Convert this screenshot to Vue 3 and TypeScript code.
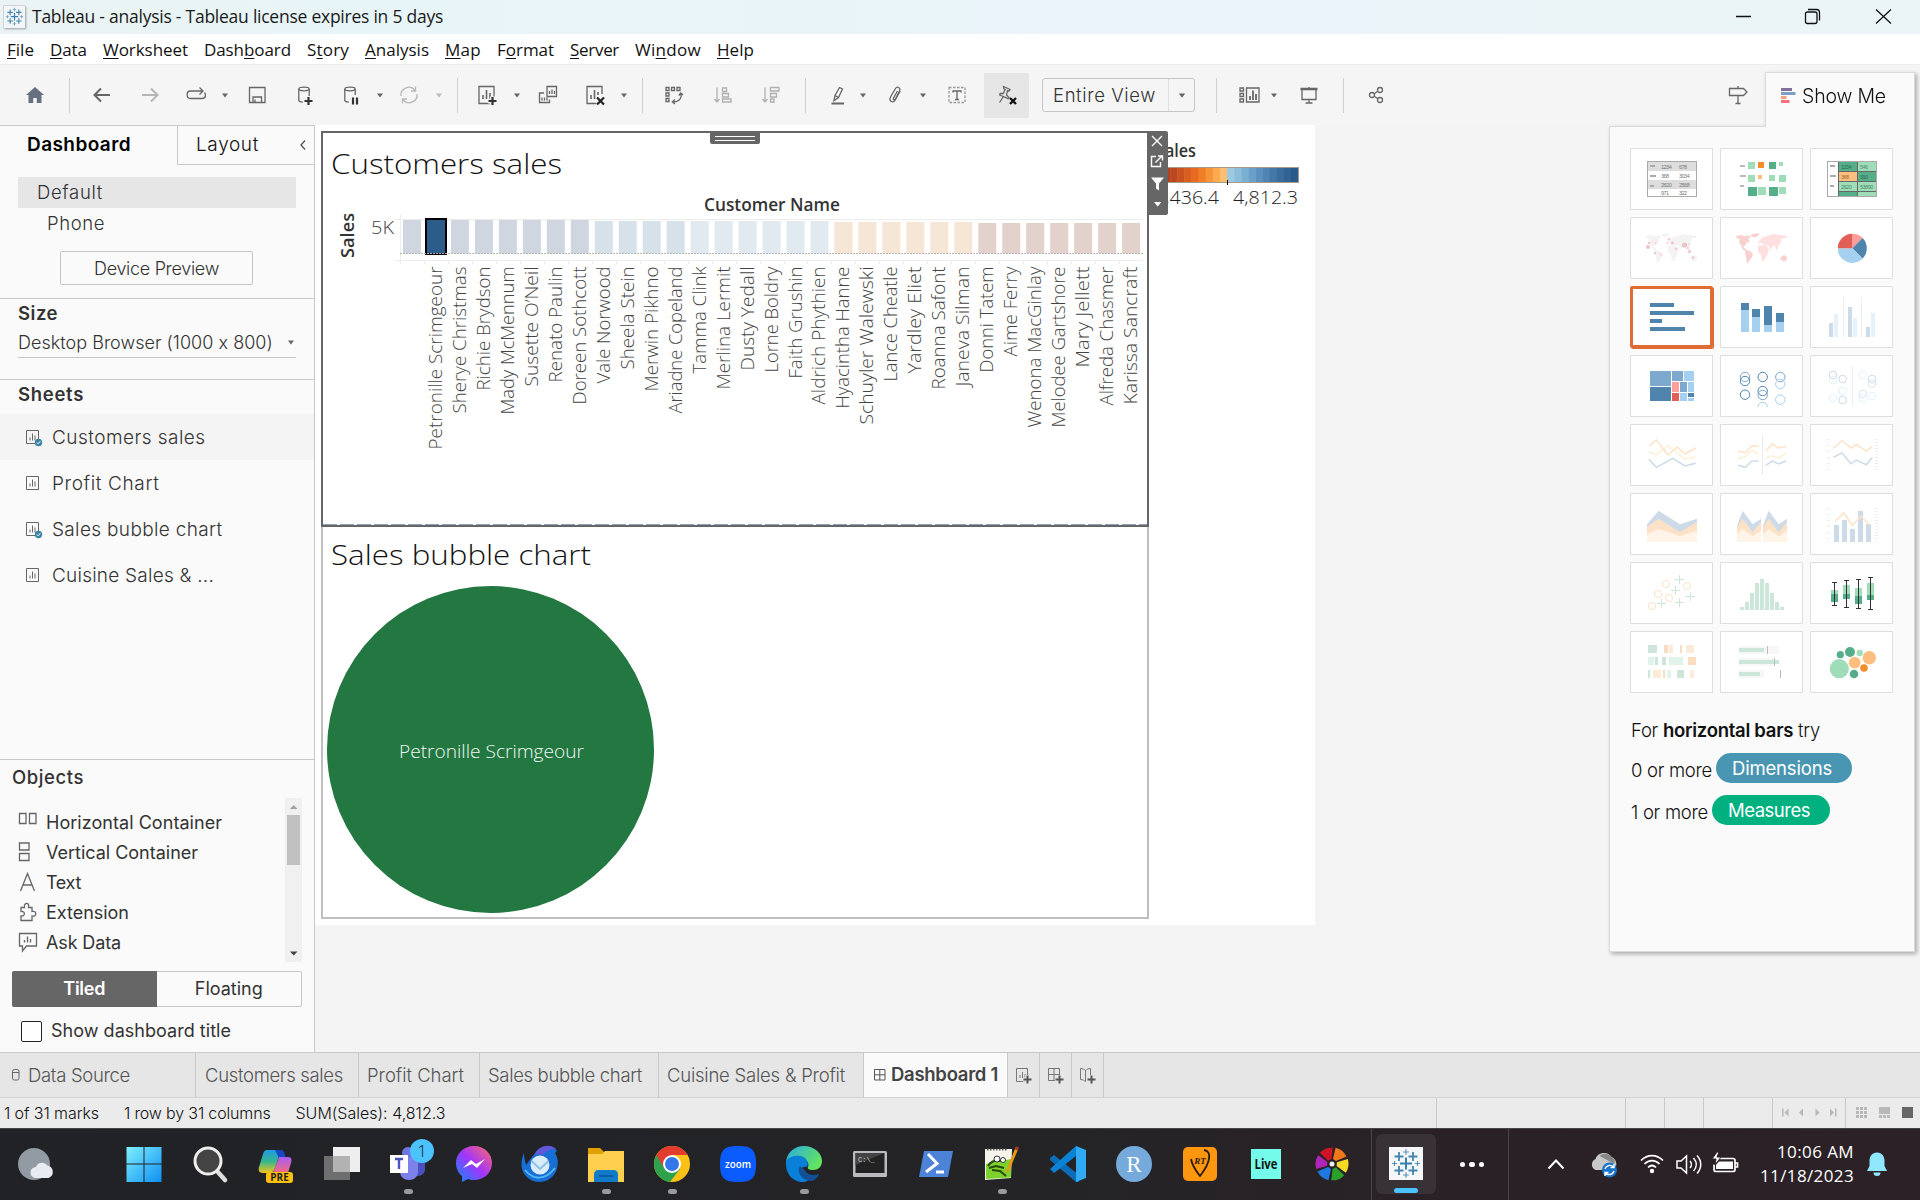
<script setup lang="ts">
import type { ObjectDirective } from 'vue'

// Tracks a label out so that it fills the given width in pixels.
const vFit: ObjectDirective<HTMLElement, number> = {
  mounted(el, { value }) {
    const count = (el.textContent ?? '').length
    if (count) el.style.letterSpacing = `${(value - el.getBoundingClientRect().width) / count}px`
  },
}

const menus = [
  ['', 'F', 'ile', 27], ['', 'D', 'ata', 37], ['', 'W', 'orksheet', 85], ['Dash', 'b', 'oard', 87],
  ['S', 't', 'ory', 42], ['', 'A', 'nalysis', 64], ['', 'M', 'ap', 36], ['F', 'o', 'rmat', 57],
  ['', 'S', 'erver', 49], ['Wi', 'n', 'dow', 66], ['', 'H', 'elp', 37],
] as const

const sheetGlyph = '<path d="M5 5.500h15v17h-15z"/><path d="M9 18v-4M12.500 18V9M16 18v-6" stroke-width="1.600"/>'
const plusGlyph = '<path d="M14 20h9M18.500 15.500v9" stroke="#f5f5f5" stroke-width="5"/><path d="M14.500 20h8M18.500 16v8" stroke="#333" stroke-width="2.200"/>'
const crossGlyph = '<path d="M15 16.500l7 7M22 16.500l-7 7" stroke="#222" stroke-width="2.200"/>'

const icons: Record<string, string> = {
  home: '<path d="M14 6L5 14h2.500v8h4.700v-5h3.600v5h4.700V14H23z" fill="#66707e" stroke="none"/>',
  back: '<path d="M22 14H7M13 7.500L6.500 14l6.500 6.500" stroke-width="2"/>',
  forward: '<path d="M6 14h15M15 7.500l6.500 6.500-6.500 6.500" stroke="#b5b5b5" stroke-width="2"/>',
  redo: '<path d="M8.500 17.500c-4.500 0-4.500-7.500 0-7.500h12M17.500 6.500L21 10l-3.500 3.500M20 17.500c4 0 4-4 2.500-6M8.500 17.500H20"/>',
  save: '<path d="M6.500 6.500h15.500v15H6.500zM10 21.500v-5.500h8.500v5.500M12 18.500v3"/>',
  dataAdd: '<ellipse cx="13" cy="8" rx="5.200" ry="1.800"/><path d="M7.800 8v11.500c0 1 2 1.500 4 1.700M18.200 8v7"/><path d="M13.500 20h8M17.500 16v8" stroke="#333" stroke-width="2.200"/>',
  dataPause: '<ellipse cx="12" cy="8" rx="5.200" ry="1.800"/><path d="M6.800 8v11.500c0 1 2 1.500 4 1.700M17.200 8v6"/><path d="M15 16.500v7M19 16.500v7" stroke="#333" stroke-width="2.200"/>',
  refresh: '<path d="M6 15a8 7.500 0 0 1 14-6M22 13a8 7.500 0 0 1-14 6M20.500 5.500V10h-4.500M7.500 22.500V18H12" stroke="#b8b8b8"/>',
  newSheet: sheetGlyph + plusGlyph,
  duplicate: '<path d="M13 5.500h9.500v10H13z"/><path d="M15.500 13v-3M18 13V8.500M20.500 13v-3"/><path d="M10 12H5.500v9.500h10V18.500"/><path d="M8 19.500v-3M10.500 19.500v-3M13 19.500v-3"/>',
  clear: '<path d="M20 13V5.500H5v17h9"/><path d="M9 18v-4M12.500 18V9M16 14v-3" stroke-width="1.600"/>' + crossGlyph,
  swap: '<path d="M6 6.500h3v3H6zM11.500 6.500h3v3h-3zM17 6.500h3v3h-3zM6 12h3v3H6zM6 17.500h3v3H6z"/><path d="M21 12.500c1 5-2 8.500-8.500 8.500M18.800 14.500l2-2.500 2.200 2M15 18.500L12.300 21l2.700 2"/>',
  sortAsc: '<g stroke="#b0b0b0"><path d="M8 6.500v14M5.500 18l2.500 3 2.500-3M13.500 7h4v3.500h-4zM13.500 12.500h6V16h-6zM13.500 18h8.500v3h-8.500z"/></g>',
  sortDesc: '<g stroke="#b0b0b0"><path d="M8 6.500v14M5.500 18l2.500 3 2.500-3M13.500 6.500H22V10h-8.500zM13.500 12.500h6V16h-6zM13.500 18h3.500v3h-3.500z"/></g>',
  highlight: '<path d="M7.500 22.500h12.500" stroke-width="2"/><path d="M10 19.500l1-5 4.500-8 3 1.500-4 8.500zM11 14.500l3.500 2"/>',
  clip: '<path d="M16.500 10l-4 7c-.8 1.500.8 2.500 1.800 1l4.200-8c1.500-3.500-2.500-5-4-2.500l-5 8.500c-2 4.500 2.500 6.500 4.700 3l5-9"/>',
  label: '<path d="M6 6.500h16v15H6z" stroke-dasharray="2.500 1.500" stroke="#999"/><path d="M10 11.500V10h8v1.500M14 10v8.500M12 18.500h4"/>',
  pin: '<path d="M10.500 5.500l6.500 3-1 1.500-1.500-.500-1 4.500 2.500 2.500-.800 1.200-8.500-3.700.500-1.500h3l2-4-1.500-1zM10.500 15.500l-4 6"/><path d="M17 17l6 6M23 17l-6 6" stroke="#111" stroke-width="2.400"/>',
  cards: '<path d="M5 7h3.500v3H5zM5 12.500h3.500v3H5zM5 18h3.500v3H5zM11.500 7H24v14H11.500z"/><path d="M15 19v-4M18 19V9.500M21 19v-6" stroke-width="1.800"/>',
  present: '<path d="M5.500 8h17" stroke-width="2.500"/><path d="M7 9v9.500h14V9M14 6v2M14 18.500V22M10.500 22h7"/>',
  share: '<circle cx="10" cy="14" r="2.500"/><circle cx="18" cy="9" r="2.500"/><circle cx="18" cy="19" r="2.500"/><path d="M12.200 12.700l3.600-2.400M12.200 15.300l3.600 2.400"/>',
  sign: '<path d="M5.500 7.500h14l3.500 3.500-3.500 3.500h-14zM14 5v2.500M14 14.500V22.500M11.500 22.500h5"/>',
  caret: '<path d="M11 12.500h6l-3 4z" fill="#666" stroke="none"/>',
  caretDim: '<path d="M11 12.500h6l-3 4z" fill="#bbb" stroke="none"/>',
}

// Toolbar commands by the middle of each button; null is a divider.
const commands: [string | null, number][] = [
  ['home', 35], [null, 69], ['back', 102], ['forward', 150], ['redo', 196], ['caret', 225], ['save', 257],
  ['dataAdd', 305], ['dataPause', 352], ['caret', 380], ['refresh', 409], ['caretDim', 439], [null, 457],
  ['newSheet', 488], ['caret', 517], ['duplicate', 548], ['clear', 596], ['caret', 624], [null, 642],
  ['swap', 674], ['sortAsc', 723], ['sortDesc', 771], [null, 805], ['highlight', 838], ['caret', 863],
  ['clip', 895], ['caret', 923], ['label', 957], ['pin', 1006],
]
const commandsAfter: [string | null, number][] = [
  [null, 1216], ['cards', 1249], ['caret', 1274], ['present', 1309], [null, 1343], ['share', 1376], ['sign', 1738],
]
function place(list: [string | null, number][], start: number) {
  let edge = start
  return list.map(([icon, middle]) => {
    const width = icon === null ? 1 : icon.startsWith('caret') ? 12 : icon === 'pin' ? 45 : 28
    const left = Math.round(middle - width / 2)
    const gap = left - edge
    edge = left + width
    return { icon, width, gap }
  })
}
const toolbarLeft = place(commands, 0)
const toolbarRight = place(commandsAfter, 1195)

const sheets = [
  { name: 'Customers sales', used: true, width: 153.5 },
  { name: 'Profit Chart', used: false, width: 107.5 },
  { name: 'Sales bubble chart', used: true, width: 170.5 },
  { name: 'Cuisine Sales & ...', used: false, width: 162 },
]
const objects = [
  { name: 'Horizontal Container', width: 176, icon: '<path d="M1.500 2.500h6.500v10H1.500zM11.500 2.500h6.500v10h-6.500z"/>' },
  { name: 'Vertical Container', width: 152, icon: '<path d="M1.500 2h9.500v7H1.500zM1.500 12.500h9.500v7H1.500z"/>' },
  { name: 'Text', width: 35, icon: '<path d="M2.500 20L9.500 2.500 16.500 20M5 14h9"/>' },
  { name: 'Extension', width: 83, icon: '<path d="M3.500 19.500h11v-4.500c5 1.500 5-6 0-4.500V6.500H11c1.500-5.500-5-5.500-4 0H3.500v4c4.500-1 4.500 5.500 0 4.500z" transform="translate(-.5 0)"/>' },
  { name: 'Ask Data', width: 75, icon: '<path d="M1.500 2.500h17v12.500h-10l-4 5v-5h-3z"/><path d="M6.500 11.500V9M9.500 11.500V5.500M12.500 11.500V8"/>' },
]

const customers: [string, number][] = [
  ['', 0], ['Petronille Scrimgeour', 450], ['Sherye Christmas', 414], ['Richie Brydson', 391], ['Mady McMennum', 415],
  ['Susette O’Neil', 387], ['Renato Paulin', 383], ['Doreen Sothcott', 405], ['Vale Norwood', 384], ['Sheela Stein', 370],
  ['Merwin Pikhno', 392], ['Ariadne Copeland', 414], ['Tamma Clink', 374], ['Merlina Lermit', 390], ['Dusty Yedall', 371],
  ['Lorne Boldry', 373], ['Faith Grushin', 379], ['Aldrich Phythien', 405], ['Hyacintha Hanne', 409],
  ['Schuyler Walewski', 425], ['Lance Cheatle', 382], ['Yardley Eliet', 374], ['Roanna Safont', 390],
  ['Janeva Silman', 387], ['Donni Tatem', 373], ['Aime Ferry', 357], ['Wenona MacGinlay', 428],
  ['Melodee Gartshore', 428], ['Mary Jellett', 368], ['Alfreda Chasmer', 406], ['Karissa Sancraft', 405],
]
const bars = customers.map(([name, end], i) => {
  const band = i < 8 ? 0 : i < 12 ? 1 : i < 18 ? 2 : i < 24 ? 3 : 4
  return {
    name,
    length: end - 267,
    x: 80 + i * 23.97,
    top: [87, 88, 88, 89, 90][band],
    fill: ['#cfd6e0', '#d7e1ea', '#e1eaf0', '#f5e6d6', '#e3d1cc'][band],
  }
})
const ramp = [
  '#a93a1f', '#b3401f', '#bb4720', '#cb5220', '#da5e20', '#e76a1f', '#f07f28', '#f79438', '#fda94f', '#ffbf70',
  '#9dcae2', '#8cbedc', '#7aafd4', '#699fc9', '#5b91be', '#4f84b3', '#4378a9', '#3a6d9e', '#326393', '#2a5a8a',
]

const ticks = (n: number, step: number, x: number) =>
  Array.from({ length: n }, (_, i) => `<path d="M${x} ${15.5 + i * step}h3" stroke="#ececec"/>`).join('')
const box = (x: number, y: number, w: number, h: number, fill: string) =>
  `<rect x="${x}" y="${y}" width="${w}" height="${h}" fill="${fill}"/>`
const ring = (x: number, y: number, r: number, stroke: string) =>
  `<circle cx="${x}" cy="${y}" r="${r}" fill="none" stroke="${stroke}"/>`
const dot = (x: number, y: number, r: number, fill: string) => `<circle cx="${x}" cy="${y}" r="${r}" fill="${fill}"/>`
const line = (points: string, stroke: string) =>
  `<polyline points="${points}" fill="none" stroke="${stroke}" stroke-width="1.500"/>`
const area = (points: string, fill: string) => `<polygon points="${points}" fill="${fill}"/>`
const rule = (x: number) => `<path d="M${x} 11v40" stroke="#ececec"/>`
const word = (x: number, y: number, t: string, fill = '#777') =>
  `<text x="${x}" y="${y}" font-size="5.500" letter-spacing="-.5" fill="${fill}" font-family="Liberation Sans, sans-serif">${t}</text>`

const americas = 'M16 19l5-1 3 1 5-.500 2 2-3 1 2 3-3 1-2 3-2 1 2 2 2 2-1 1-3-2-2-4-2-3 1-3-3-1zM26 33l4 1 3 3-1.500 4-2.500 3-1 3-1.500-3-.500-5-1-3z'
const greenland = 'M30 18l5-1.500 5 0-3 3-3 1z'
const eurasia = 'M40 23l3-3 5-1 5-2 7 1 7 1-1 2-4 0-1 3-1 3-2 2 0 3-2 1-1-4-2 0-2 4-2-4-3-1-1 1-3-3-4 0z'
const africa = 'M38 29l5-1 4 1 2 3-1 4-2 4-2 4-2 0-1-6-3-3z'
const oceania = 'M60 41l4-3 3 2-1 4-4 0z'
const blue = '#4f85ad', sky = '#a6d0f0', mid = '#7ca9cd', green = '#56ad8a', mint = '#9fddb9'
const peach = '#fde2c8', cream = '#fdf0d8', haze = '#cddbe9', sage = '#cce6da', wisp = '#e3f2fd'

const thumbs = [
  box(17.5, 13.5, 49, 35, '#fff') + box(18, 14, 48, 9, '#ddd') + box(18, 32, 48, 9, '#ddd')
    + '<rect x="17.500" y="13.500" width="49" height="35" fill="none" stroke="#aaa"/>'
    + box(20, 17, 5, 2, '#aaa') + box(20, 27, 6, 2, '#aaa') + box(20, 37, 4, 2, '#aaa')
    + word(31, 20.5, '1234') + word(49, 20.5, '678') + word(31, 29.5, '368') + word(49, 29.5, '3034')
    + word(31, 38.5, '2620') + word(49, 38.5, '2568') + word(31, 46.5, '971') + word(49, 46.5, '322'),
  box(28, 14, 7, 7, mint) + box(38, 14, 6, 6, '#f28e2b') + box(49, 14, 7, 7, green) + box(59, 14, 4, 4, mint)
    + box(28, 27, 7, 7, mint) + box(38, 27, 4, 4, '#ffbe7d') + box(49, 27, 6, 6, mint) + box(59, 27, 7, 7, mint)
    + box(28, 39, 9, 9, green) + box(38, 39, 8, 8, mint) + box(49, 39, 9, 9, green) + box(59, 39, 7, 7, mint)
    + box(20, 17, 5, 2, '#bbb') + box(20, 27, 6, 2, '#bbb') + box(20, 37, 4, 2, '#bbb'),
  box(28, 14, 38, 34, '#666') + box(29, 14, 18, 9, green) + box(48, 14, 18, 9, mint)
    + box(29, 24, 18, 9, '#ffbe7d') + box(48, 24, 18, 9, green) + box(29, 34, 18, 9, mint) + box(48, 34, 18, 9, mint)
    + box(29, 44, 18, 4, green) + box(48, 44, 18, 4, mint)
    + '<rect x="17.500" y="13.500" width="49" height="35" fill="none" stroke="#aaa"/>'
    + box(20, 17, 5, 2, '#aaa') + box(20, 27, 6, 2, '#aaa') + box(20, 37, 4, 2, '#aaa')
    + word(31, 20.5, '1234', '#2c6b50') + word(50, 20.5, '546', '#4a8a6a') + word(31, 30.5, '368', '#a0683a')
    + word(50, 30.5, '310', '#2c6b50') + word(31, 40.5, '2620', '#4a8a6a') + word(50, 40.5, '53890', '#4a8a6a'),
  `<path d="${americas}${greenland}${eurasia}${africa}${oceania}" fill="#f3f3f3"/>`
    + dot(18, 30, 2, '#eec3c8') + dot(19, 26, 1.2, '#eec3c8') + dot(25.5, 26, 1.5, '#fbdcdc') + dot(39, 22, 1.5, '#f6cccc')
    + dot(42.5, 26, 1.6, '#eec3c8') + dot(37.5, 25.7, 1.3, '#fbdcdc') + dot(54.5, 28, 2.6, '#eec3c8') + dot(59, 27.5, 1.2, '#fbdcdc')
    + dot(59.5, 34.5, 1.8, '#f6cccc') + dot(46, 32, 1.2, '#f6cccc') + dot(25, 36, 1.2, '#eec3c8') + dot(31, 37.5, 1.5, '#fbdcdc')
    + dot(63, 40.5, 1.2, '#eec3c8') + dot(58, 31, 1, '#eec3c8'),
  `<path d="${americas}${greenland}${oceania}" fill="#f8d0ce"/><path d="${eurasia}${africa}" fill="#fde0df"/>`,
  '<path d="M42.300 31.300V16.800A14.500 14.500 0 0 1 52.500 21z" fill="#ff9d9a"/>'
    + `<path d="M42.300 31.300L52.500 21A14.500 14.500 0 0 1 52.500 41.600z" fill="${blue}"/>`
    + `<path d="M42.300 31.300L52.500 41.600A14.500 14.500 0 0 1 27.800 31.300z" fill="${sky}"/>`
    + '<path d="M42.300 31.300H27.800A14.500 14.500 0 0 1 42.300 16.800z" fill="#e15f57"/>',
  box(20, 17, 24, 4, blue) + box(20, 25, 44, 4, blue) + box(20, 33, 12, 4, blue) + box(20, 41, 35, 4, blue),
  box(21, 17, 8, 7, blue) + box(21, 24, 8, 22, sky) + box(32, 23, 8, 8, blue) + box(32, 31, 8, 15, sky)
    + box(44, 20, 8, 19, blue) + box(44, 39, 8, 7, sky) + box(56, 27, 8, 9, blue) + box(56, 36, 8, 10, sky),
  box(19, 37, 4, 14, haze) + box(24, 28, 4, 23, wisp) + rule(33.5) + box(38, 21, 4, 30, haze) + box(43, 32, 4, 19, wisp)
    + rule(51.5) + box(56, 41, 4, 10, haze) + box(61, 27, 4, 24, wisp),
  box(20, 16, 21, 15, mid) + box(20, 32, 21, 14, blue) + box(42, 16, 11, 10, mid) + box(54, 16, 10, 10, sky)
    + box(42, 27, 7, 10, '#ffa09d') + box(50, 27, 7, 10, mid) + box(58, 27, 6, 10, sky) + box(42, 38, 7, 8, '#e15f57')
    + box(50, 38, 7, 8, sky) + box(58, 38, 6, 4, blue) + box(58, 43, 6, 3, sky),
  ring(25, 22, 4.7, mid) + ring(25, 26, 4.7, blue) + ring(25, 39.7, 4.7, blue) + ring(42.7, 22, 4.7, blue)
    + ring(42.7, 36, 4.7, blue) + ring(42.7, 40, 4.7, mid) + '<path d="M38 52a4.700 4.700 0 0 1 9.400 0" fill="none" stroke="#a6d0f0"/>'
    + ring(60.3, 22, 4.7, mid) + ring(60.3, 29, 4.7, sky) + ring(60.3, 44.7, 4.7, sky),
  ring(23, 20, 3.8, haze) + ring(23, 25, 3.8, wisp) + ring(32.7, 24, 3.8, haze) + ring(32.7, 36, 3.8, wisp) + ring(23, 43, 3.8, wisp)
    + ring(32.7, 45, 3.8, haze) + rule(42.5) + ring(52.7, 20, 3.8, wisp) + ring(62, 24, 3.8, haze) + ring(62, 28.7, 3.8, '#d8e6f3')
    + ring(52.7, 39, 3.8, '#d8e6f3') + ring(52.7, 43.5, 3.8, wisp) + ring(62, 41, 3.8, wisp),
  line('18.700,27.700 26.300,30.700 38,21.700 55.300,35.300 65.700,33', cream)
    + line('19.300,22 26.300,16 38,31 47.300,23 54.700,30 66,24', peach)
    + line('18.700,35.300 26.300,43.300 43,34.300 54.700,42 65.700,39.300', haze),
  line('18,27 25.300,28.700 32,21.700 39,22.300', peach) + line('18,34.300 25.300,32.700 32,25.700 38.700,30.300', cream)
    + line('18,41.300 25.300,43.300 32,37 38.700,37', haze) + rule(42.5) + line('46,27 52.300,19.700 58.300,24 66,22.300', peach)
    + line('45.700,34.300 52.300,31.700 58.700,33.700 66,29.300', cream) + line('45.700,41.300 52.300,37 58.700,40 66,37', haze),
  ticks(6, 6, 17) + ticks(11, 3, 65) + line('23.300,24.300 32,16.700 41,24 46.300,20.300 56.300,27 62.300,22.300', peach)
    + line('23.300,33.300 32,29 41,39.700 46.300,36 56.300,40.700 62.300,33.300', haze),
  area('17,31.300 28.700,17.700 50,31.300 67,25.700 67,49 17,49', haze) + area('17,33.700 28.700,25.700 50,39.300 67,28.700 67,49 17,49', peach)
    + area('17,41.300 28.700,36.300 50,43.300 67,37.700 67,49 17,49', '#fef5e8'),
  [0, 26].map((dx) => `<g transform="translate(${dx})">` + area('17,32.700 22.700,17.700 32.700,31.300 41,25.700 41,49 17,49', haze)
    + area('17,34 22.700,25.700 32.700,39.300 41,28.700 41,49 17,49', peach)
    + area('17,41.300 22.700,36 32.700,43.300 41,38 41,49 17,49', '#fef5e8') + '</g>').join(''),
  ticks(6, 6, 17) + ticks(11, 3, 65) + box(24, 32, 5, 17, haze) + box(32, 27, 5, 22, haze) + box(40, 36, 5, 13, haze)
    + box(48, 18, 5, 31, haze) + box(56, 31, 5, 18, haze) + line('25,28.300 34,20 42.300,32.300 51,23.300 60.300,32.300', peach),
  [[22, 44], [28, 32], [36, 22], [39, 36], [57, 24]].map(([x, y]) => ring(x, y, 3.6, peach)).join('')
    + [[31.5, 41.5], [45.5, 28.5], [49.5, 17.5], [49.5, 40.5], [60.5, 34.5]]
      .map(([x, y]) => `<path d="M${x - 4.5} ${y}h9M${x} ${y - 4.5}v9" stroke="${sage}"/>`).join(''),
  [45, 40, 31, 21, 17, 21, 31, 40, 45].map((t, i) => box(20 + i * 5, t, 4, 48 - t, sage)).join(''),
  [[21, 20, 28, 32, 40, 43], [33, 18, 23, 32, 37, 45], [45, 17, 26, 34, 42, 46], [57, 15, 21, 33, 38, 47]]
    .map(([x, a, b, c, d, e]) => box(x, b, 7, c - b, mint) + box(x, c, 7, d - c, green)
      + `<path d="M${x + 3.5} ${a}.500V${e}.500M${x + 1} ${a}.500h5M${x + 1} ${e}.500h5" stroke="#333"/>`).join(''),
  box(18, 14, 9, 8, sage) + box(34, 14, 4, 8, '#fbdcc0') + box(39, 14, 4, 8, '#fdebd9') + box(50, 14, 2, 8, '#fbdcc0')
    + box(56, 14, 8, 8, '#fdebd9') + box(18, 26, 6, 8, '#e2f4ea') + box(25, 26, 3, 8, sage) + box(32, 26, 4, 8, sage)
    + box(39, 26, 14, 8, '#e2f4ea') + box(58, 26, 8, 8, '#fbdcc0') + box(18, 39, 2, 8, sage) + box(23, 39, 8, 8, '#fdebd9')
    + box(33, 39, 2, 8, '#fbdcc0') + box(37, 39, 4, 8, '#e2f4ea') + box(47, 39, 7, 8, sage) + box(60, 39, 4, 8, '#fdebd9'),
  box(19, 15, 40, 8, '#f7f7f7') + box(19, 17, 25, 4, sage) + box(47, 15, 1, 8, '#bbb') + box(19, 27, 35, 8, '#f7f7f7')
    + box(19, 29, 40, 4, sage) + box(54, 27, 1, 8, '#bbb') + box(19, 39, 25, 8, '#f7f7f7') + box(19, 41, 21, 4, sage) + box(60, 39, 1, 8, '#bbb'),
  dot(29.3, 37.7, 9.6, mint) + dot(30.3, 23.7, 3.6, green) + dot(40, 21, 5, green) + dot(49.7, 22, 3.2, mint)
    + dot(59.3, 26.7, 6.7, '#ffbe7d') + dot(44.7, 31.7, 5.9, '#ffbe7d') + dot(54, 37, 3.8, '#f28e2b') + dot(44, 43, 4.3, green),
]

const tabs = [
  { name: 'Data Source', size: 196, pad: 28, width: 102 },
  { name: 'Customers sales', size: 163, pad: 9, width: 138 },
  { name: 'Profit Chart', size: 121, pad: 8, width: 97 },
  { name: 'Sales bubble chart', size: 179, pad: 8, width: 154 },
  { name: 'Cuisine Sales & Profit', size: 205, pad: 8, width: 178 },
]
const tabAdds = [
  '<path d="M4.500 5.500h11v13h-11z"/><path d="M8 15v-3M10.500 15V9M13 15v-4"/>',
  '<path d="M4.500 5.500h11v12h-11zM10 5.500v12M4.500 11.500h11"/>',
  '<path d="M4.500 5.500c2 0 4 1 5 2v11c-1-1-3-2-5-2zM9.500 7.500c1-1 3-2 5-2v12"/>',
]

const plusMark = (x: number, y: number, s: number, w: number, c: string) =>
  `<path d="M${x - s} ${y}h${2 * s}M${x} ${y - s}v${2 * s}" stroke="${c}" stroke-width="${w}"/>`
const tableauMark = plusMark(24, 23.5, 6, 2, '#3a7fae') + plusMark(17, 16.5, 4.5, 1.8, '#4386b0') + plusMark(31, 16.5, 4.5, 1.8, '#4386b0')
  + plusMark(17, 30.5, 4.5, 1.8, '#4386b0') + plusMark(31, 30.5, 4.5, 1.8, '#4386b0') + plusMark(24, 12, 2.8, 1.2, '#5b93b8')
  + plusMark(24, 35, 2.8, 1.2, '#5b93b8') + plusMark(12.5, 23.5, 2.5, 1.2, '#5b93b8') + plusMark(35.5, 23.5, 2.5, 1.2, '#5b93b8')

const apps: { art: string; open?: boolean }[] = [
  { art: '<defs><linearGradient id="win" x1="0" y1="0" x2="1" y2="1"><stop stop-color="#7ff0ff"/><stop offset="1" stop-color="#0d8ff2"/></linearGradient></defs><path d="M6.500 7h17v16.500h-17zM24.500 7h17v16.500h-17zM6.500 24.500h17V42h-17zM24.500 24.500h17V42h-17z" fill="url(#win)"/>' },
  { art: '<path d="M31 31l8 9" stroke="#ddd" stroke-width="4.500" stroke-linecap="round"/><circle cx="22" cy="21" r="13" fill="#444" stroke="#eee" stroke-width="3"/>' },
  { art: '<defs><linearGradient id="cpa" x1="0" y1="0" x2="0" y2="1"><stop stop-color="#1f9be6"/><stop offset=".5" stop-color="#35b68c"/><stop offset="1" stop-color="#f4c51c"/></linearGradient><linearGradient id="cpb" x1="0" y1="0" x2="0" y2="1"><stop stop-color="#a95cf5"/><stop offset="1" stop-color="#f46a7c"/></linearGradient></defs><path d="M15 10h14l-6 18c-1 3-3 5-6 5h-6c-4 0-5-3-4-6l4-13c1-3 2-4 4-4z" fill="url(#cpa)"/><path d="M23 10h5c4 0 4 2 5 5l1 3h-7z" fill="#1746c4"/><path d="M27 17h9c4 0 4 3 3 6l-3 10H21z" fill="url(#cpb)"/><rect x="14" y="32" width="27" height="11" rx="3" fill="#fdc10e"/><text x="27.500" y="41" font-size="10" font-weight="700" text-anchor="middle" fill="#222" font-family="Open Sans, sans-serif">PRE</text>' },
  { art: '<path d="M6 16h26v24H6z" fill="#6e6e6e"/><path d="M15 7h27v25H15z" fill="#eee"/><path d="M15 16h17v16H15z" fill="#b2b2b2"/>' },
  { art: '<circle cx="24" cy="13" r="6" fill="#6d77e0"/><path d="M31 18h10v11c0 5-4 7-8 7z" fill="#4a50bd"/><path d="M16 17h18v14c0 6-4 9-9 9s-9-3-9-9z" fill="#7b83eb"/><path d="M6 15h18v18H6z" fill="#fff"/><path d="M11 19h8M15 19v10" stroke="#4b53bc" stroke-width="2.400"/><circle cx="38" cy="11" r="12" fill="#4cc2ff"/><text x="38" y="17" font-size="17" text-anchor="middle" fill="#111" font-family="Open Sans, sans-serif">1</text>', open: true },
  { art: '<defs><linearGradient id="msg" x1="1" y1="0" x2="0" y2="1"><stop stop-color="#ff6b6b"/><stop offset=".5" stop-color="#a334fa"/><stop offset="1" stop-color="#0a8bff"/></linearGradient></defs><path d="M24 6c11 0 18 8 18 17s-7 17-18 17c-2 0-4 0-6-1l-6 3v-6c-4-3-6-8-6-13C6 14 13 6 24 6z" fill="url(#msg)"/><path d="M13 28l8-8 5 4 9-5-8 9-5-4z" fill="#fff"/>' },
  { art: '<path d="M8 13c-3 7-4 15 1 22 7 9 21 9 28 1 6-7 6-17 2-23l2-2c-4-6-16-6-21 1l-7 9-3 4c-1-4-2-8-2-12z" fill="#176fd6"/><path d="M19 14c3-8 15-11 21-5-7 0-10 3-13 6z" fill="#6256d9"/><circle cx="24" cy="25" r="9.500" fill="#d9ecfb"/><path d="M15.500 21l8.500 8 8.500-8" fill="none" stroke="#8fbfe8" stroke-width="2"/><path d="M9 30c8 10 20 11 30-2" fill="none" stroke="#53b5f5" stroke-width="2"/>' },
  { art: '<path d="M6 8h12l4 4h20v30H6z" fill="#e0a100"/><path d="M6 14h14l3-3h19v31H6z" fill="#ffd04f"/><path d="M12 42v-8c0-2 2-4 4-4h16c2 0 4 2 4 4v8z" fill="#117ac9"/><path d="M17 36h14" stroke="#0b5697" stroke-width="1.500"/>', open: true },
  { art: '<circle cx="24" cy="24" r="18" fill="#fbc116"/><path d="M24 24L8.400 15A18 18 0 0 0 22 41.900z" fill="#2da14b"/><path d="M24 24l8 5-10 13A18 18 0 0 1 12 37z" fill="#2da14b"/><path d="M8.400 15A18 18 0 0 1 39.600 15H24l-8 13z" fill="#e33b2e"/><circle cx="24" cy="24" r="9" fill="#fff"/><circle cx="24" cy="24" r="7" fill="#3278ea"/>', open: true },
  { art: '<path d="M24 6c14 0 18 4 18 18s-4 18-18 18S6 38 6 24 10 6 24 6z" fill="#0b5cff"/><text x="24" y="27.500" font-size="11" font-weight="600" text-anchor="middle" fill="#fff" textLength="26" lengthAdjust="spacingAndGlyphs" font-family="Open Sans, sans-serif">zoom</text>' },
  { art: '<defs><linearGradient id="edg" x1="0" y1="0" x2="1" y2=".5"><stop stop-color="#2aa9e8"/><stop offset="1" stop-color="#62e35f"/></linearGradient></defs><path d="M6 22C7 12 15 6 24 6c10 0 18 7 18 15 0 6-4 9-9 9-4 0-6-1-5-3 2-5-3-9-8-9-6 0-11 2-14 4z" fill="url(#edg)"/><path d="M6 21c3-4 8-6 14-5 7 1 9 7 7 11-7-2-9 8 1 13 0 1-3 2-5 2C13 42 5 34 6 21z" fill="#0a7fd8"/><path d="M20 26c-4 7 3 15 12 15 3-1 6-4 7-7-5 2-12 1-14-4z" fill="#114f96"/>', open: true },
  { art: '<rect x="7" y="11" width="34" height="26" rx="1.500" fill="#b8bcbe"/><path d="M9.500 13h29v20h-29z" fill="#222"/><path d="M9.500 13h29l-29 12z" fill="#444"/><text x="12" y="22" font-size="7" fill="#ccc" font-family="Liberation Mono, monospace">C:\\_</text>' },
  { art: '<path d="M12 11h29l-5 26H7z" fill="#4c83d9"/><path d="M16 14l9 9.500-11 8.500M24 32h8" fill="none" stroke="#fff" stroke-width="3"/>' },
  { art: '<path d="M7 9h27l-1 29-26 2z" fill="#f4f4ea"/><path d="M8 24l25-5v18.500L8 39z" fill="#7dd22e"/><path d="M9 9.500h20" stroke="#555" stroke-width="2" stroke-dasharray="1.500 1.500"/><path d="M10 26c3-5 8-6 13-5M11 28l7-2 8 2M14 30l8 1 6 5" fill="none" stroke="#28480c" stroke-width="2"/><circle cx="19" cy="19" r="3" fill="#fff" stroke="#333"/><circle cx="25" cy="20" r="2.500" fill="#fff" stroke="#333"/><path d="M39 8L29 32" stroke="#e99a13" stroke-width="3"/><path d="M39.500 7l-1.300 3" stroke="#b53a20" stroke-width="3"/>', open: true },
  { art: '<path d="M6 18l4-3 25 20v7h-3L6 20z" fill="#0b6cb7"/><path d="M6 29l26-23v10L10 33z" fill="#0a82d6"/><path d="M32 6l10 4v28l-10 4z" fill="#30aaf5"/>' },
  { art: '<circle cx="24" cy="24" r="18" fill="#75aadb"/><text x="24" y="31.500" font-size="23" text-anchor="middle" fill="#fff" font-family="Liberation Serif, serif">R</text>' },
  { art: '<rect x="7" y="7" width="34" height="34" rx="5" fill="#ff960f"/><path d="M28 10c8 1 7 12-4 26-4-5-8-11-9-17" fill="none" stroke="#2a1c0c" stroke-width="1.800"/><text x="24" y="24" font-size="9" font-style="italic" font-weight="700" text-anchor="middle" fill="#2a1c0c" font-family="Liberation Serif, serif">RT</text>' },
  { art: '<path d="M9 9h30v30H9z" fill="#74fbea"/><text x="24" y="29" font-size="13.500" font-weight="700" text-anchor="middle" fill="#111" textLength="23" lengthAdjust="spacingAndGlyphs" font-family="Open Sans, sans-serif">Live</text>' },
  { art: ['#f07818', '#f4dc26', '#2ba02b', '#1f77e0', '#ae25b8', '#cf1225'].map((c, i) => `<path d="M25 19L27.500 7.800A16.500 16.500 0 0 1 38.500 16.500L28 21z" fill="${c}" transform="rotate(${i * 60} 24 24)"/>`).join('') + '<circle cx="24" cy="24" r="2.500" fill="#eee"/>' },
]
</script>

<template>
  <div class="screen">
    <header class="title">
      <svg class="logo" viewBox="7 6.500 34 35" v-html="tableauMark"></svg>
      <span v-fit="411">Tableau - analysis - Tableau license expires in 5 days</span>
      <svg class="window" viewBox="0 0 180 34" fill="none" stroke="#111" stroke-width="1.300">
        <path d="M8 16.500h15M148 9.500l15 14M163 9.500l-15 14" />
        <rect x="77.500" y="12" width="11.500" height="11.500" rx="2" />
        <path d="M80 9.500h8.500a3 3 0 0 1 3 3v8" />
      </svg>
    </header>

    <nav class="menu">
      <span v-for="m in menus" :key="m[2]" v-fit="m[3]">{{ m[0] }}<u>{{ m[1] }}</u>{{ m[2] }}</span>
    </nav>

    <div class="toolbar">
      <div v-for="(c, i) in toolbarLeft" :key="'l' + i" class="tool" :class="{ divider: !c.icon, pressed: c.icon === 'pin' }" :style="{ width: c.width + 'px', marginLeft: c.gap + 'px' }">
        <svg v-if="c.icon" viewBox="0 0 28 28" v-html="icons[c.icon]"></svg>
      </div>
      <div class="combo">
        <span v-fit="103">Entire View</span>
        <i><svg viewBox="0 0 28 28" v-html="icons.caret"></svg></i>
      </div>
      <div v-for="(c, i) in toolbarRight" :key="'r' + i" class="tool" :class="{ divider: !c.icon }" :style="{ width: c.width + 'px', marginLeft: c.gap + 'px' }">
        <svg v-if="c.icon" viewBox="0 0 28 28" v-html="icons[c.icon]"></svg>
      </div>
    </div>

    <main class="body">
      <aside class="side">
        <div class="side-tabs">
          <div class="side-tab on"><b v-fit="104">Dashboard</b></div>
          <div class="side-tab off">
            <span v-fit="63">Layout</span>
            <svg width="8" height="12" viewBox="0 0 8 12"><path d="M6 1.500L2 6l4 4.500" fill="none" stroke="#555" stroke-width="1.300" /></svg>
          </div>
        </div>
        <div class="device chosen"><span v-fit="66">Default</span></div>
        <div class="device phone"><span v-fit="58">Phone</span></div>
        <div class="preview"><span v-fit="125">Device Preview</span></div>

        <section class="size">
          <h3><span v-fit="40">Size</span></h3>
          <div class="picker">
            <span v-fit="257">Desktop Browser (1000 x 800)</span>
            <svg viewBox="0 0 28 28" width="28" height="28" v-html="icons.caret"></svg>
          </div>
        </section>

        <section class="sheets">
          <h3><span v-fit="66">Sheets</span></h3>
          <div v-for="(s, i) in sheets" :key="s.name" class="sheet" :class="{ hover: i === 0 }">
            <svg width="18" height="20" viewBox="0 0 18 20" fill="none" stroke="#666">
              <path d="M.500 3.500h12v13H.500zM4 13.500v-3M6.500 13.500V6.500M9 13.500v-5" />
              <template v-if="s.used">
                <circle cx="12.500" cy="15.500" r="3.700" fill="#3b84a6" stroke="none" />
                <path d="M10.800 15.500l1.300 1.300 2.300-2.600" stroke="#fff" />
              </template>
            </svg>
            <span v-fit="s.width">{{ s.name }}</span>
          </div>
        </section>

        <section class="objects">
          <h3><span v-fit="72">Objects</span></h3>
          <div class="object-box">
            <div class="object-list">
              <div v-for="o in objects" :key="o.name" class="object">
                <svg width="20" height="22" viewBox="0 0 20 22" fill="none" stroke="#666" stroke-width="1.300" v-html="o.icon"></svg>
                <span v-fit="o.width">{{ o.name }}</span>
              </div>
            </div>
            <div class="scroll">
              <svg width="17" height="17" viewBox="0 0 17 17"><path d="M5 11h7.500L8.700 7z" fill="#a0a0a0" /></svg>
              <div class="thumb-bar"></div>
              <svg width="17" height="17" viewBox="0 0 17 17"><path d="M5 6.500h7.500l-3.800 4z" fill="#444" /></svg>
            </div>
          </div>
          <div class="toggle">
            <b><span v-fit="42">Tiled</span></b>
            <div><span v-fit="68">Floating</span></div>
          </div>
          <label class="check"><i></i><span v-fit="180">Show dashboard title</span></label>
        </section>
      </aside>

      <div class="workspace">
        <div class="canvas">
          <div class="zones">
            <svg class="zone top" width="828" height="396" viewBox="0 0 828 396">
              <g>
                <text class="heading" x="10" y="42.500" textLength="231" lengthAdjust="spacingAndGlyphs">Customers sales</text>
                <text class="strong" x="383" y="80" textLength="136" lengthAdjust="spacingAndGlyphs">Customer Name</text>
                <text class="strong" transform="translate(32.500 127) rotate(-90)" textLength="45" lengthAdjust="spacingAndGlyphs">Sales</text>
                <text class="faint" x="50" y="103" textLength="23" lengthAdjust="spacingAndGlyphs">5K</text>
                <path d="M74 88.500h748M74 129.500h748" stroke="#ededed" />
                <path d="M79.500 83v46" stroke="#ededed" />
                <g v-for="(b, i) in bars" :key="i">
                  <rect v-if="i !== 1" :x="b.x + 2" :y="b.top + 2" width="18" :height="120.5 - b.top" :fill="b.fill" />
                  <rect v-else x="105" y="88" width="20" height="35" fill="#2b5c8a" stroke="#000" stroke-width="2" />
                  <path :d="`M${Math.round(b.x) - 0.5} 129v4`" stroke="#ededed" />
                  <text v-if="b.name" class="faint" :textLength="b.length" lengthAdjust="spacingAndGlyphs" :transform="`translate(${b.x + 17} ${b.length + 135.5}) rotate(-90)`">{{ b.name }}</text>
                </g>
                <path d="M79 122.500h743" stroke="#b5b5b5" stroke-dasharray="2 1" />
              </g>
              <path d="M2 393.500h824" stroke="#8fa3bf" stroke-dasharray="14 3" />
              <rect x="1" y="1" width="826" height="394" fill="none" stroke="#666" stroke-width="2" />
              <path d="M389 0h50v11a2 2 0 0 1-2 2h-46a2 2 0 0 1-2-2z" fill="#666" />
              <path d="M394 5.500h40M394 9.500h40" stroke="#fff" />
            </svg>
            <svg class="zone" width="828" height="392" viewBox="0 0 828 392">
              <path d="M1 0V391H827V0" fill="none" stroke="#bfbfbf" stroke-width="2" />
              <text class="heading" x="10" y="38" textLength="260" lengthAdjust="spacingAndGlyphs">Sales bubble chart</text>
              <circle cx="169.500" cy="222.500" r="163.500" fill="#237740" />
              <text class="mark" x="78" y="231" textLength="185" lengthAdjust="spacingAndGlyphs">Petronille Scrimgeour</text>
            </svg>
          </div>
          <svg class="legend" width="160" height="100" viewBox="0 0 160 100">
            <text class="strong" x="6" y="25.500" textLength="40" lengthAdjust="spacingAndGlyphs">Sales</text>
            <rect v-for="(c, i) in ramp" :key="c" :x="6 + i * 7.1" y="36" width="7.500" height="16" :fill="c" />
            <rect x="5.500" y="36.500" width="143" height="15" fill="none" stroke="#a89a86" />
            <path d="M77.500 49v5" stroke="#111" />
            <text class="scale" x="4" y="73" textLength="65" lengthAdjust="spacingAndGlyphs">1,436.4</text>
            <text class="scale" x="83" y="73" textLength="65" lengthAdjust="spacingAndGlyphs">4,812.3</text>
          </svg>
          <svg class="zone-tools" width="21" height="84" viewBox="0 0 21 84">
            <rect width="21" height="84" rx="2" fill="#666" />
            <g fill="none" stroke="#fff" stroke-width="1.400">
              <path d="M5 5l10 10M15 5L5 15M9 25.500H4.500v10h9V31M8.500 31.500l6-6M11 25h4.500v4.500" />
              <path d="M4 46.500h13l-5 6v7l-3-2v-5z" fill="#fff" stroke="none" />
              <path d="M7 71h7.500L10.700 75.500z" fill="#fff" stroke="none" />
            </g>
          </svg>
        </div>
      </div>
    </main>

    <div class="show-me">
      <div class="show-tab">
        <svg width="15" height="16" viewBox="0 0 15 16">
          <path d="M0 0h11v3H0z" fill="#83709a" /><path d="M0 4h14.500v3H0z" fill="#7c9fc4" />
          <path d="M0 8h5.500v3H0z" fill="#f5a27a" /><path d="M0 12h8.500v3H0z" fill="#fb6f7c" />
        </svg>
        <span v-fit="84">Show Me</span>
      </div>
      <div class="show-body">
        <div class="grid">
          <div v-for="(t, i) in thumbs" :key="i" class="type" :class="{ picked: i === 6 }">
            <svg width="83" height="62" viewBox="0 0 83 62" v-html="t"></svg>
          </div>
        </div>
        <p><span v-fit="189">For <b>horizontal bars</b> try</span></p>
        <p class="need"><span v-fit="81">0 or more</span><em class="dim"><span v-fit="100">Dimensions</span></em></p>
        <p class="need"><span v-fit="77">1 or more</span><em class="mea"><span v-fit="82">Measures</span></em></p>
      </div>
    </div>

    <div class="tabs">
      <div v-for="(t, i) in tabs" :key="t.name" class="tab" :style="{ width: t.size + 'px', paddingLeft: t.pad + 'px' }">
        <svg v-if="i === 0" class="db" width="8" height="12" viewBox="0 0 8 12" fill="none" stroke="#666">
          <rect x=".5" y=".5" width="6.500" height="10.500" rx="1.800" /><path d="M.500 3.500h6.500" />
        </svg>
        <span v-fit="t.width">{{ t.name }}</span>
      </div>
      <div class="tab current">
        <svg width="12" height="12" viewBox="0 0 12 12" fill="none" stroke="#555"><path d="M.500.500h10.500v10.500H.500zM5.800.500v10.500M.500 5.800h10.500" /></svg>
        <b v-fit="107">Dashboard 1</b>
      </div>
      <div v-for="(a, i) in tabAdds" :key="i" class="tab add">
        <svg width="24" height="24" viewBox="0 0 24 24" fill="none" stroke="#777">
          <g v-html="a"></g>
          <path d="M11 16.500h9M15.500 12v9" stroke="#e6e6e6" stroke-width="4.500" /><path d="M11.500 16.500h8M15.500 12.500v8" stroke="#555" stroke-width="2" />
        </svg>
      </div>
    </div>

    <div class="status">
      <span v-fit="95">1 of 31 marks</span>
      <span v-fit="146.5">1 row by 31 columns</span>
      <span v-fit="150">SUM(Sales): 4,812.3</span>
      <svg width="484" height="30" viewBox="0 0 484 30">
        <path d="M.500 0v30M189.500 0v30M228.500 0v30M267.500 0v30M336.500 0v30M409.500 0v30" stroke="#c8c8c8" />
        <g fill="#b8b8b8">
          <path d="M346 10.500h1.500v8H346zM352.500 10.500v8L348.500 14.500zM367 10.500v8L363 14.500zM379.500 10.500v8l4-4zM394 10.500v8l4-4zM399 10.500h1.500v8H399z" />
          <path d="M420 9h3v3h-3zM424 9h3v3h-3zM428 9h3v3h-3zM420 13h3v3h-3zM424 13h3v3h-3zM428 13h3v3h-3zM420 17h3v3h-3zM424 17h3v3h-3zM428 17h3v3h-3z" />
          <path d="M443 9h11v7h-11zM443 17h3v3h-3zM447 17h3v3h-3zM451 17h3v3h-3z" />
          <path d="M466 9h11v11h-11z" fill="#666" />
        </g>
      </svg>
    </div>

    <footer class="taskbar">
      <svg class="weather" width="48" height="48" viewBox="0 0 48 48">
        <circle cx="23" cy="24" r="16" fill="#929aa3" />
        <path d="M25 38a5.500 5.500 0 0 1 0-11 6.500 6.500 0 0 1 11.500-1.500 6.500 6.500 0 0 1 1 12.500z" fill="#e8ecf2" />
      </svg>
      <div class="apps">
        <div v-for="(a, i) in apps" :key="i" class="app">
          <svg width="48" height="48" viewBox="0 0 48 48" v-html="a.art"></svg>
          <i v-if="a.open"></i>
        </div>
      </div>
      <div class="app active">
        <svg width="48" height="48" viewBox="0 0 48 48"><path d="M7 7h34v33H7z" fill="#f4f6f8" /><g v-html="tableauMark"></g></svg>
        <i></i>
      </div>
      <div class="more"><i></i><i></i><i></i></div>
      <svg class="tray" width="250" height="72" viewBox="0 0 250 72" fill="none" stroke="#fff" stroke-width="1.700">
        <path d="M39.500 39.500l7.500-8 7.500 8" stroke-width="2" />
        <g transform="translate(-1.500 -1)">
          <g stroke="none">
            <path d="M88 42a6 6 0 0 1 0-11 9 9 0 0 1 16-2c6 2 7 12 0 13z" fill="#c9c9c9" />
            <path d="M92 28a8 8 0 0 1 12 1 6 6 0 0 1 3 7z" fill="#888" />
            <circle cx="102" cy="42" r="7.500" fill="#1673c8" />
          </g>
          <path d="M97.500 41a5 5 0 0 1 8.500-2M106.500 43a5 5 0 0 1-8.500 2M106.500 36v3.500H103M97.500 48v-3.500h3.500" stroke-width="1.400" />
        </g>
        <g transform="translate(143 -1)"><path d="M-11 32.500c6.500-6.500 15.500-6.500 22 0M-7.500 36c4.500-4.500 10.500-4.500 15 0M-4 39.500c2.500-2.500 5.500-2.500 8 0" /><circle cy="43" r="2.200" fill="#fff" stroke="none" /></g>
        <path d="M168 32h4l5.500-5v17l-5.500-5h-4zM181 32c1.800 2 1.800 5 0 7M184.500 29c3.500 4 3.500 9 0 13M188 26.500c5 5.500 5 12.500 0 18" stroke-width="1.500" />
        <path d="M209 29.500h15a2 2 0 0 1 2 2v9a2 2 0 0 1-2 2h-17a2 2 0 0 1-2-2v-5M226.500 34h2v4h-2" />
        <path d="M210 32.500h14v7.500h-17v-4z" fill="#fff" stroke="none" />
        <path d="M208 23l-5 7h4l-1 6 6-8h-4l2-5z" fill="#fff" stroke="#2a2126" stroke-width="1" />
      </svg>
      <div class="clock"><span v-fit="77">10:06 AM</span><span v-fit="94">11/18/2023</span></div>
      <svg class="bell" width="22" height="26" viewBox="0 0 22 26" fill="#8fe8ff">
        <path d="M11 .500c5 0 7.500 4 7.500 8.500v5l2.500 5H1l2.500-5V9C3.500 4.500 6 .500 11 .500zM7.500 20.500h7a3.500 3.500 0 0 1-7 0z" />
      </svg>
    </footer>
  </div>
</template>

<style>
html, body { margin: 0; overflow: hidden; background: #f4f4f4; }
</style>

<style scoped>
.screen {
  display: flex;
  flex-direction: column;
  position: relative;
  width: 1920px;
  height: 1200px;
  overflow: hidden;
  background: #f4f4f4;
  color: #333;
  font: 300 18.5px Inter, "Open Sans", sans-serif;
  white-space: nowrap;
}
.title {
  display: flex;
  align-items: center;
  height: 34px;
  background: linear-gradient(90deg, #eaf3f3 0, #e8f5f8 18%, #eaf4fa 55%, #ebf4fa 70%, #ebf4f6 85%);
  color: #1a1a1a;
  font: 400 17.5px/30px "Open Sans", "Noto Sans", sans-serif;
}
.title span { margin-bottom: 2px; }
.logo { width: 21px; height: 22px; margin: 0 7px 0 4px; background: #f3f6f8; box-shadow: 0 0 0 0.5px #bbb, 1px 1px 2px #999; }
.window { width: 180px; height: 34px; margin-left: auto; margin-right: 12px; }
.menu {
  display: flex;
  align-items: center;
  gap: 16px;
  height: 30px;
  box-sizing: border-box;
  padding: 1px 0 0 7px;
  background: #fff;
  color: #111;
  font: 400 17px "Open Sans", "Noto Sans", sans-serif;
}
.menu u { text-underline-offset: 2px; text-decoration-thickness: 1px; }
.toolbar { display: flex; align-items: center; height: 61px; box-sizing: border-box; background: #f5f5f5; border-top: 1px solid #ececec; }
.tool { display: flex; flex: none; align-items: center; justify-content: center; height: 45px; }
.tool svg { flex: none; width: 28px; height: 28px; fill: none; stroke: #666; stroke-width: 1.3; }
.tool.divider { height: 35px; background: #d0d0d0; }
.tool.pressed { background: #e6e6e6; }
.combo {
  display: flex;
  align-items: center;
  box-sizing: border-box;
  width: 153px;
  height: 34px;
  margin-left: 13px;
  padding-left: 10px;
  border: 1px solid #c6c6c6;
  border-radius: 3px;
}
.combo i { display: flex; align-items: center; justify-content: center; width: 25px; height: 32px; margin-left: auto; border-left: 1px solid #e0e0e0; }
.combo svg { flex: none; width: 30px; height: 30px; }

.body { display: flex; height: 927px; }
.side { display: flex; flex: none; flex-direction: column; box-sizing: border-box; width: 315px; background: #fafafa; border-right: 1px solid #c9c9c9; }
.side-tabs { display: flex; height: 40px; margin-bottom: 12px; }
.side-tab { display: flex; align-items: center; box-sizing: border-box; border-top: 1px solid #c9c9c9; }
.side-tab.on { width: 177px; padding: 0 0 2px 27px; color: #000; font-size: 19px; }
.side-tab.on b { font-weight: 600; }
.side-tab.off { width: 137px; padding: 0 7px 1px 18px; justify-content: space-between; border-left: 1px solid #c9c9c9; border-bottom: 1px solid #c9c9c9; color: #111; font-size: 19px; }
.device { display: flex; align-items: center; box-sizing: border-box; height: 31px; margin: 0 18px; padding: 0 0 2px 19px; }
.device.chosen { background: #e6e6e6; }
.device.phone { padding-left: 29px; }
.preview { display: flex; align-items: center; justify-content: center; box-sizing: border-box; width: 193px; height: 34px; margin: 12px 0 13px 60px; border: 1px solid #c6c6c6; border-radius: 2px; font-size: 18px; }
h3 { display: flex; align-items: center; box-sizing: border-box; height: 28px; margin: 0; padding: 0 0 1px 18px; font-size: 18.5px; font-weight: 600; }
.size { box-sizing: border-box; height: 81px; border-top: 1px solid #c9c9c9; }
.picker { display: flex; align-items: center; justify-content: space-between; box-sizing: border-box; width: 278px; height: 31px; margin-left: 18px; border-bottom: 1px solid #c6c6c6; font-size: 18px; }
.picker svg { flex: none; margin-right: -9px; }
.sheets { box-sizing: border-box; height: 380px; border-top: 1px solid #c9c9c9; }
.sheets h3 { margin-bottom: 6px; }
.sheet { display: flex; align-items: center; height: 46px; padding-left: 26px; }
.sheet span { margin-left: 8px; font-size: 19px; }
.sheet.hover { background: #f4f4f4; }
.objects { flex: 1; border-top: 1px solid #c9c9c9; font-weight: 400; font-size: 18px; }
.objects h3 { height: 34px; padding-left: 12px; font-weight: 500; }
.object-box { display: flex; justify-content: space-between; height: 164px; margin: 4px 12px 9px 18px; }
.object-list { padding-top: 9px; }
.object { display: flex; align-items: center; height: 30px; }
.object span { margin-left: 8px; }
.scroll { display: flex; flex-direction: column; width: 17px; background: #f0f0f0; }
.scroll svg:last-child { margin-top: auto; }
.thumb-bar { height: 50px; margin: 0 2px; background: #c1c1c1; }
.toggle { display: flex; box-sizing: border-box; width: 290px; height: 36px; margin-left: 12px; border: 1px solid #c6c6c6; border-radius: 2px; }
.toggle b, .toggle div { display: flex; align-items: center; justify-content: center; flex: 1; box-sizing: border-box; padding-bottom: 2px; }
.toggle b { margin: -1px 0 -1px -1px; background: #666; border-radius: 2px 0 0 2px; color: #fff; font-weight: 600; }
.check { display: flex; align-items: center; height: 22px; margin: 13px 0 0 21px; }
.check span { margin-bottom: 2px; }
.check i { box-sizing: border-box; width: 21px; height: 21px; margin-right: 9px; background: #fff; border: 1px solid #222; border-radius: 2px; }

.workspace { flex: 1; background: #f4f4f4; }
.canvas { position: relative; display: flex; width: 1000px; height: 800px; background: #fff; }
.zones { display: flex; flex-direction: column; padding: 6px 0 0 6px; }
.zone { display: block; }
.canvas text { font: 400 18px "Open Sans", "Noto Sans", sans-serif; }
.canvas .heading { font-size: 28px; font-weight: 300; fill: #111; }
.canvas .strong { font-size: 17.5px; font-weight: 600; fill: #333; }
.canvas .faint { font-size: 18px; font-weight: 300; fill: #444; }
.canvas .scale { font-size: 18.5px; font-weight: 300; fill: #222; }
.canvas .mark { font-size: 18.5px; font-weight: 300; fill: #f2f8f4; }
.legend { margin: 6px 0 0 1px; }
.zone-tools { position: absolute; left: 832px; top: 6px; }

.show-me { position: absolute; left: 1609px; top: 72px; width: 306px; filter: drop-shadow(2px 2px 2px rgba(0, 0, 0, 0.3)); color: #111; }
.show-tab { display: flex; align-items: center; box-sizing: border-box; position: relative; z-index: 1; width: 150px; height: 55px; margin-left: 156px; padding: 0 0 8px 15px; background: #fafafa; border: 1px solid #dadada; border-bottom: 0; }
.show-tab span { margin-left: 6px; font-size: 19.5px; }
.show-body { box-sizing: border-box; height: 826px; margin-top: -1px; padding: 21px 0 0 20px; background: #fafafa; border: 1px solid #dadada; font-size: 18.5px; }
.grid { display: grid; grid-template-columns: repeat(3, 83px); gap: 7px; }
.type { height: 62px; background: #fff; box-shadow: inset 0 0 0 1px #dedede; border-radius: 1px; }
.type.picked { box-shadow: inset 0 0 0 3px #df6c34, 1px 1px 0 #df6c34; border-radius: 2px; }
.type svg { display: block; }
p { display: flex; align-items: center; height: 30px; margin: 22px 0 0 1px; }
p b { font-weight: 600; }
.need { margin-top: 8px; }
.need + .need { margin-top: 12px; }
.need > span { margin-top: 3px; }
em { display: flex; align-items: center; box-sizing: border-box; height: 30px; margin-left: 4px; padding: 0 0 1px 16px; border-radius: 15px; color: #fff; font-style: normal; font-weight: 400; }
.dim { width: 136px; background: #4996b2; }
.mea { width: 118px; background: #00b180; }

.tabs { display: flex; box-sizing: border-box; height: 46px; border-top: 1px solid #c9c9c9; border-bottom: 1px solid #d2d2d2; background: #e6e6e6; color: #555; }
.tab { display: flex; flex: none; align-items: center; box-sizing: border-box; border-right: 1px solid #c9c9c9; }
.db { margin: 0 8px 0 -16px; }
.tab.current { width: 144px; padding-left: 10px; background: #fafafa; color: #444; }
.tab.current b { margin: 0 0 2px 5px; font-weight: 600; }
.tab.add { justify-content: center; width: 32px; }
.status { display: flex; align-items: center; height: 30px; padding-left: 4px; background: #ebebeb; color: #111; font-size: 16px; }
.status span { margin-right: 25px; }
.status svg { margin-left: auto; }

.taskbar { display: flex; align-items: center; box-sizing: border-box; height: 72px; border-top: 1px solid #454545; background: linear-gradient(90deg, #212226 0, #242427 55%, #2a2126 75%, #2b2126); color: #fff; }
.weather { flex: none; margin: 0 51px 1px 11px; }
.apps { display: flex; flex: none; box-sizing: border-box; width: 1262px; height: 72px; padding-left: 1px; border-right: 1px solid #4a4648; }
.app { display: flex; flex: none; align-items: center; justify-content: center; position: relative; box-sizing: border-box; width: 66px; height: 72px; padding-bottom: 1px; }
.app svg { overflow: visible; }
.app i { position: absolute; bottom: 7px; width: 9px; height: 5px; border-radius: 3px; background: #9a9a9c; }
.app.active { width: 60px; height: 60px; margin: 0 0 1px 4px; border-radius: 6px; background: #383236; }
.app.active i { bottom: 1px; width: 24px; background: #4cc2ff; }
.more { display: flex; align-items: center; justify-content: center; gap: 4px; box-sizing: border-box; width: 73px; height: 72px; border-right: 1px solid #4a4648; }
.more i { width: 5.5px; height: 5.5px; border-radius: 50%; background: #fff; }
.tray { flex: none; }
.clock { display: flex; flex-direction: column; align-items: flex-end; width: 95px; margin-bottom: 2px; font: 400 17px/24px "Open Sans", "Noto Sans", sans-serif; }
.bell { margin-left: 12px; }
</style>
